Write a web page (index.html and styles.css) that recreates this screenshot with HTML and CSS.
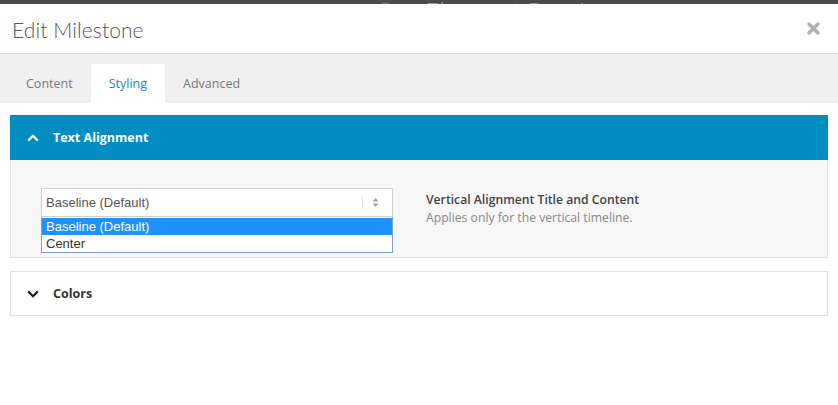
FILE: index.html
```html
<!DOCTYPE html>
<html>
<head>
<meta charset="utf-8">
<link rel="stylesheet" href="styles.css">
</head>
<body>
<div class="topbar">
  <span class="top-icon"></span>
  <span class="top-title">Element Preview</span>
</div>
<div class="modal">
  <div class="modal-header">
    <h1 class="modal-title">Edit Milestone</h1>
    <button class="close" aria-label="Close">
      <svg width="13" height="13" viewBox="0 0 13 13"><path d="M2 2 L11 11 M11 2 L2 11" stroke="#b0b0b0" stroke-width="3.4" stroke-linecap="round"/></svg>
    </button>
  </div>
  <div class="tabs">
    <span class="tab">Content</span>
    <span class="tab active">Styling</span>
    <span class="tab">Advanced</span>
  </div>
  <div class="panels">
    <div class="panel open">
      <div class="panel-head">
        <svg class="chev" width="12" height="8" viewBox="0 0 12 8"><path d="M1.2 6.6 L6 1.8 L10.8 6.6" fill="none" stroke="#fff" stroke-width="2.2"/></svg>
        <span class="panel-title">Text Alignment</span>
      </div>
      <div class="panel-body">
        <div class="select-wrap">
          <div class="select">
            <span class="select-value">Baseline (Default)</span>
            <span class="select-sep"></span>
            <svg class="select-arrows" width="7" height="11" viewBox="0 0 7 11"><path d="M3.5 1 L6.5 4.5 L0.5 4.5 Z M3.5 10 L6.5 6.5 L0.5 6.5 Z" fill="#a0a0a0"/></svg>
          </div>
          <ul class="dropdown">
            <li class="option selected">Baseline (Default)</li>
            <li class="option">Center</li>
          </ul>
        </div>
        <div class="desc">
          <div class="desc-title">Vertical Alignment Title and Content</div>
          <div class="desc-text">Applies only for the vertical timeline.</div>
        </div>
      </div>
    </div>
    <div class="panel">
      <div class="panel-head">
        <svg class="chev" width="12" height="8" viewBox="0 0 12 8"><path d="M1.2 1.4 L6 6.2 L10.8 1.4" fill="none" stroke="#222" stroke-width="2.2"/></svg>
        <span class="panel-title">Colors</span>
      </div>
    </div>
  </div>
</div>
</body>
</html>
```

FILE: styles.css
```css
* { box-sizing: border-box; }
html, body { margin: 0; padding: 0; background: #fff; }
body { font-family: "Open Sans", "Noto Sans", sans-serif; color: #444; width: 838px; height: 405px; overflow: hidden; }

.topbar {
  height: 4px;
  background: #4b4b4b;
  overflow: hidden;
  display: flex;
  align-items: flex-end;
}
.top-icon {
  width: 15px; height: 15px;
  border-radius: 50%;
  background: #6a6a6a;
  margin-left: 378px;
  margin-bottom: -13px;
  flex: none;
}
.top-title {
  margin-left: 32px;
  font-size: 26px;
  font-weight: 300;
  color: #9a9a9a;
  line-height: 26px;
  margin-bottom: -20px;
  white-space: nowrap;
}

.modal-header {
  height: 50px;
  border-bottom: 1px solid #dcdcdc;
  display: flex;
  align-items: center;
  justify-content: space-between;
  padding: 2px 18px 0 12px;
}
.modal-title {
  margin: 0;
  font-family: Lato, "Open Sans", sans-serif;
  font-weight: 300;
  font-size: 21px;
  color: #555;
  letter-spacing: 0.1px;
}
.close {
  border: 0; background: none; padding: 0; margin: -2px 0 0;
  width: 13px; height: 13px; display: block;
}
.close svg { display: block; }

.tabs {
  height: 49px;
  background: #f0f0f0;
  display: flex;
  align-items: flex-end;
  padding-left: 8px;
}
.tab {
  height: 39px;
  line-height: 40px;
  padding: 0 18px;
  font-size: 12.5px;
  color: #777;
}
.tab.active { background: #fff; color: #1b87bd; }

.panels {
  padding: 12px 10px 0;
  display: flex;
  flex-direction: column;
  gap: 13px;
}
.panel { border: 1px solid #e0e0e0; }
.panel.open { border: 0; }
.panel-head {
  height: 43px;
  display: flex;
  align-items: center;
  padding-left: 16px;
  gap: 14px;
}
.panel.open .panel-head { height: 45px; background: #008ec2; padding-left: 17px; }
.chev { display: block; flex: none; }
.panel-title { font-size: 12.5px; font-weight: 700; color: #333; }
.panel.open .panel-title { color: #fff; }

.panel-body {
  background: #f7f7f7;
  border: 1px solid #e2e2e2;
  border-top: 0;
  height: 98px;
  padding: 28px 30px 0;
  display: flex;
  gap: 33px;
}
.select-wrap { position: relative; width: 352px; flex: none; }
.select {
  height: 29px;
  background: #fff;
  border: 1px solid #cfcfcf;
  box-shadow: 0 1px 1px rgba(0,0,0,0.06);
  display: flex;
  align-items: center;
  padding-left: 4px;
  font-family: "Liberation Sans", Arial, sans-serif;
  font-size: 13px;
  color: #555;
}
.select-value { flex: 1; }
.select-sep { width: 1px; height: 12px; background: #e0e0e0; margin-right: 9px; }
.select-arrows { margin-right: 13px; display: block; }
.dropdown {
  position: absolute;
  left: 0; top: 29px;
  width: 352px;
  margin: 0; padding: 0;
  list-style: none;
  background: #fff;
  border: 1px solid #7d9fd6;
  border-top: 0;
  font-family: "Liberation Sans", Arial, sans-serif;
  font-size: 13px;
  color: #333;
}
.option { height: 17px; line-height: 17px; padding-left: 4px; }
.option.selected { background: #1e90ff; color: #fff; margin-top: 1px; }

.desc { padding-top: 3px; }
.desc-title { font-size: 12.2px; font-weight: 600; color: #444; line-height: 18px; }
.desc-text { font-size: 12.2px; color: #888; line-height: 18px; }
```
